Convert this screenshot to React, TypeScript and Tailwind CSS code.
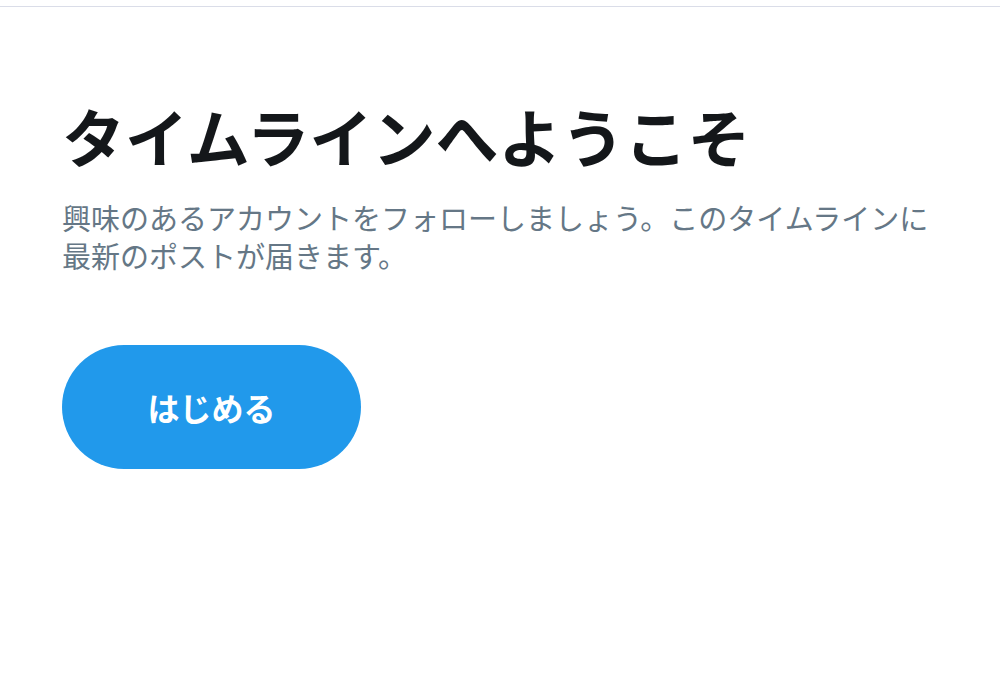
import React from "react";

export default function App() {
  return (
    <div
      className="w-[1000px] h-[684px] bg-white overflow-hidden"
      style={{ fontFamily: '"Noto Sans CJK JP", "Noto Sans", sans-serif' }}
    >
      <div className="h-[7px] border-b border-[#dadde8]" />
      <div className="pl-[62px] pt-[91px]">
        <h1 className="text-[63px] leading-[74px] font-bold text-[#14171a]">
          タイムラインへようこそ
        </h1>
        <p className="mt-[26px] text-[29px] leading-[38px] text-[#657786] w-[920px]">
          興味のあるアカウントをフォローしましょう。このタイムラインに
          <br />
          最新のポストが届きます。
        </p>
        <button className="mt-[71px] w-[299px] h-[124px] rounded-full bg-[#2199eb] text-white text-[32px] font-bold flex items-center justify-center">
          はじめる
        </button>
      </div>
    </div>
  );
}
